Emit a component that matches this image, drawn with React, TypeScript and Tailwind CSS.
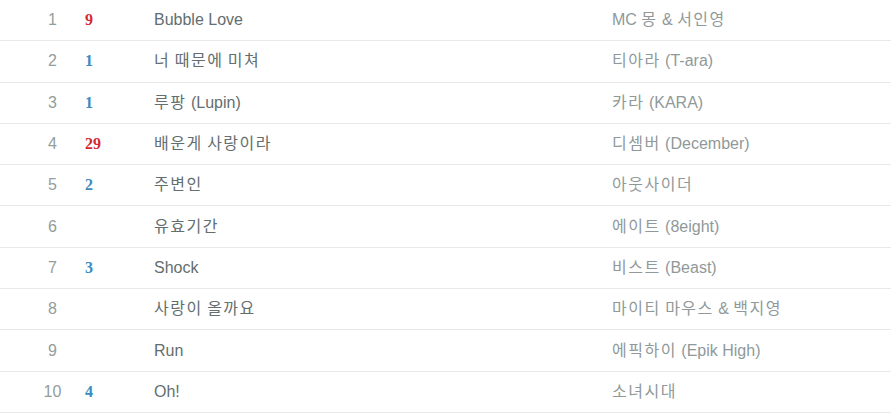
import React from "react";

interface ChartRow {
  rank: number;
  change?: number;
  up?: boolean;
  title: string;
  artist: string;
}

const rows: ChartRow[] = [
  { rank: 1, change: 9, up: true, title: "Bubble Love", artist: "MC 몽 & 서인영" },
  { rank: 2, change: 1, up: false, title: "너 때문에 미쳐", artist: "티아라 (T-ara)" },
  { rank: 3, change: 1, up: false, title: "루팡 (Lupin)", artist: "카라 (KARA)" },
  { rank: 4, change: 29, up: true, title: "배운게 사랑이라", artist: "디셈버 (December)" },
  { rank: 5, change: 2, up: false, title: "주변인", artist: "아웃사이더" },
  { rank: 6, title: "유효기간", artist: "에이트 (8eight)" },
  { rank: 7, change: 3, up: false, title: "Shock", artist: "비스트 (Beast)" },
  { rank: 8, title: "사랑이 올까요", artist: "마이티 마우스 & 백지영" },
  { rank: 9, title: "Run", artist: "에픽하이 (Epik High)" },
  { rank: 10, change: 4, up: false, title: "Oh!", artist: "소녀시대" },
];

const sans = {
  fontFamily: '"Liberation Sans", "Noto Sans CJK KR", sans-serif',
};

const Label: React.FC<{ text: string }> = ({ text }) => {
  const parts = text.split(/([\uac00-\ud7a3]+)/);
  return (
    <>
      {parts.map((p, i) =>
        /[\uac00-\ud7a3]/.test(p) ? (
          <span key={i} className="tracking-[1.5px]">
            {p}
          </span>
        ) : (
          <span key={i}>{p}</span>
        )
      )}
    </>
  );
};

const App: React.FC = () => {
  return (
    <div className="w-[891px] h-[417px] bg-white overflow-hidden" style={sans}>
      {rows.map((row) => (
        <div
          key={row.rank}
          className="flex items-center h-[41.3px] border-b border-[#e6e9e9] text-[16px] leading-none"
        >
          <div className="w-[55px] ml-[25px] text-center text-[#939d9c]">
            {row.rank}
          </div>
          <div
            className={
              "w-[69px] ml-[5px] text-[16px] font-bold " +
              (row.up ? "text-[#d42a2e]" : "text-[#3a8bc0]")
            }
            style={{ fontFamily: '"Liberation Serif", serif' }}
          >
            {row.change ?? ""}
          </div>
          <div className="w-[458px] text-[#636e6e]">
            <Label text={row.title} />
          </div>
          <div className="text-[#8f9999]">
            <Label text={row.artist} />
          </div>
        </div>
      ))}
    </div>
  );
};

export default App;
